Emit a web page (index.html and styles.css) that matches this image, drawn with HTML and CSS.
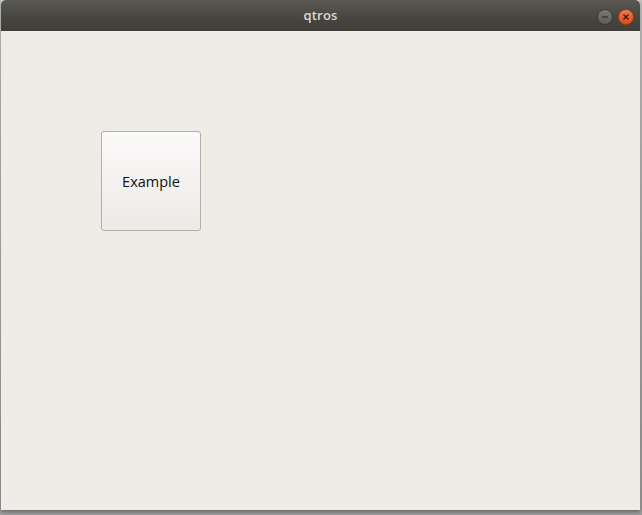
FILE: index.html
```html
<!DOCTYPE html>
<html>
<head>
<meta charset="utf-8">
<link rel="stylesheet" href="styles.css">
</head>
<body>
<div class="desktop">
  <div class="window">
    <div class="titlebar">
      <div class="title">qtros</div>
      <div class="controls">
        <span class="ctl min"><svg width="10" height="10" viewBox="0 0 10 10"><line x1="2" y1="5" x2="8" y2="5" stroke="#2f2e2b" stroke-width="1.2"/></svg></span>
        <span class="ctl close"><svg width="10" height="10" viewBox="0 0 10 10"><path d="M2.5 2.5 L7.5 7.5 M7.5 2.5 L2.5 7.5" stroke="#3a1a0c" stroke-width="1.3"/></svg></span>
      </div>
    </div>
    <div class="content">
      <button class="example">Example</button>
    </div>
  </div>
</div>
</body>
</html>
```
FILE: styles.css
```css
html, body {
  margin: 0;
  padding: 0;
}
body {
  width: 642px;
  height: 515px;
  overflow: hidden;
  background: linear-gradient(#c8c8c8, #9e9e9e);
  font-family: "Open Sans", "DejaVu Sans", sans-serif;
}
.desktop {
  display: flex;
  padding-left: 1px;
  height: 515px;
  box-sizing: border-box;
}
.window {
  width: 639px;
  height: 510px;
  display: flex;
  flex-direction: column;
  box-shadow: 0 2px 4px rgba(0,0,0,0.35);
}
.titlebar {
  height: 31px;
  flex: none;
  background: linear-gradient(#5a5852, #46453f 60%, #3f3e39);
  border-radius: 5px 5px 0 0;
  position: relative;
  display: flex;
  align-items: center;
  justify-content: center;
}
.title {
  color: #dcd8cf;
  font-size: 13px;
  font-weight: 600;
  letter-spacing: 0.2px;
  margin-top: -1px;
}
.controls {
  position: absolute;
  right: 6px;
  top: 9px;
  display: flex;
  gap: 5px;
}
.ctl {
  width: 16px;
  height: 16px;
  border-radius: 50%;
  display: flex;
  align-items: center;
  justify-content: center;
  box-sizing: border-box;
}
.ctl.min {
  background: linear-gradient(#7b7a75, #5d5c57);
  border: 1px solid #3a3935;
}
.ctl.close {
  background: linear-gradient(#f37a4f, #df4a1c);
  border: 1px solid #a83a16;
}
.content {
  flex: 1;
  background: #efebe7;
  padding: 100px 0 0 100px;
}
.example {
  width: 100px;
  height: 100px;
  border: 1px solid #b3aea8;
  border-radius: 3px;
  background: linear-gradient(#fbfafa, #edeae6);
  font-family: "Open Sans", "DejaVu Sans", sans-serif;
  font-size: 14.5px;
  color: #111;
  padding: 0;
  display: block;
}
```
